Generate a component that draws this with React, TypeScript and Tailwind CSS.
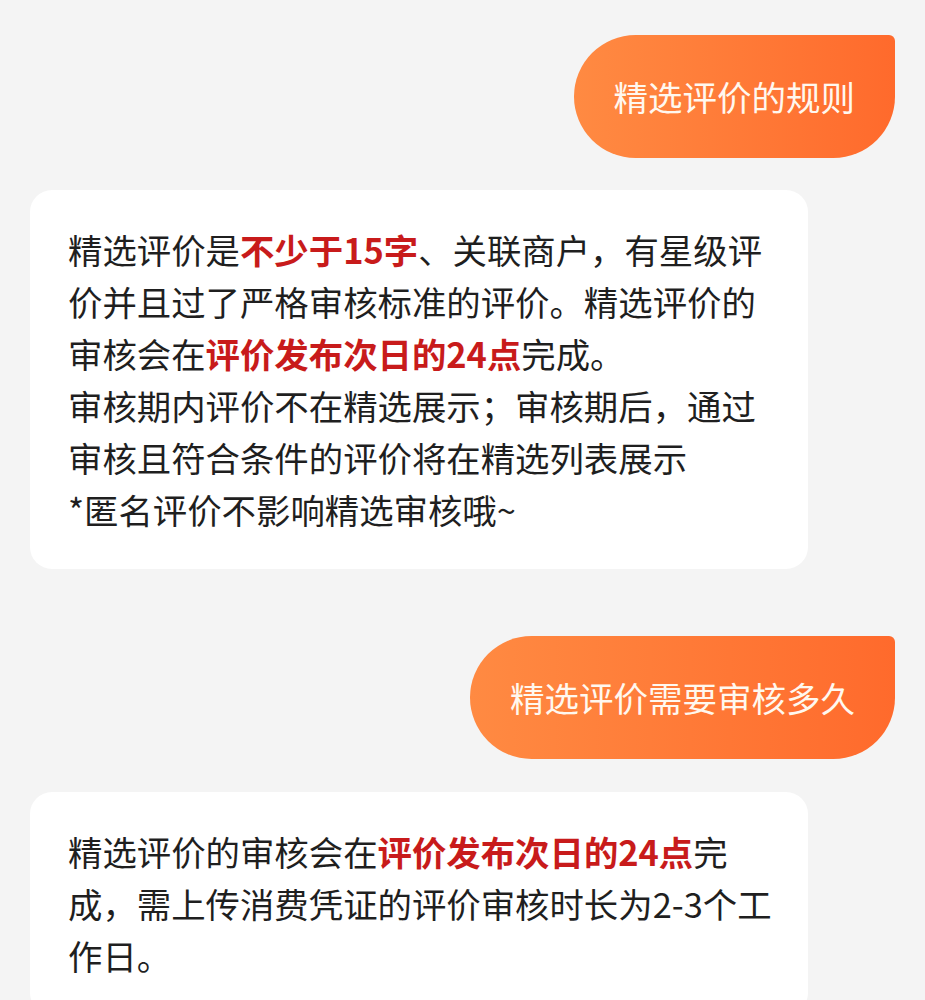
import React from "react";

const font = {
  fontFamily: '"Noto Sans CJK SC", "Noto Sans", sans-serif',
} as React.CSSProperties;

function Question({ children }: { children: React.ReactNode }) {
  return (
    <div className="flex justify-end">
      <div className="flex h-[123px] items-center whitespace-nowrap rounded-[62px] rounded-tr-[6px] bg-gradient-to-r from-[#ff8a42] to-[#ff6a2c] px-[40px] text-[34.5px] text-[#fff8ef]">
        {children}
      </div>
    </div>
  );
}

function Hl({ children }: { children: React.ReactNode }) {
  return <span className="font-bold text-[#c81b1b]">{children}</span>;
}

function Answer({ children }: { children: React.ReactNode }) {
  return (
    <div className="w-[778px] rounded-[22px] bg-white px-[38px] pb-[34px] pt-[33px] text-[34.4px] leading-[52px] text-[#1f1f1f]">
      {children}
    </div>
  );
}

export default function App() {
  return (
    <div
      className="min-h-screen overflow-hidden bg-[#f4f4f4] px-[30px] pt-[35px]"
      style={font}
    >
      <Question>精选评价的规则</Question>

      <div className="mt-[32px]">
        <Answer>
          <div className="whitespace-nowrap">
            精选评价是<Hl>不少于15字</Hl>、关联商户，有星级评
          </div>
          <div className="whitespace-nowrap">
            价并且过了严格审核标准的评价。精选评价的
          </div>
          <div className="whitespace-nowrap">
            审核会在<Hl>评价发布次日的24点</Hl>完成。
          </div>
          <div className="whitespace-nowrap">
            审核期内评价不在精选展示；审核期后，通过
          </div>
          <div className="whitespace-nowrap">
            审核且符合条件的评价将在精选列表展示
          </div>
          <div className="whitespace-nowrap">*匿名评价不影响精选审核哦~</div>
        </Answer>
      </div>

      <div className="mt-[67px]">
        <Question>精选评价需要审核多久</Question>
      </div>

      <div className="mt-[33px]">
        <Answer>
          <div className="whitespace-nowrap">
            精选评价的审核会在<Hl>评价发布次日的24点</Hl>完
          </div>
          <div className="whitespace-nowrap">
            成，需上传消费凭证的评价审核时长为2-3个工
          </div>
          <div className="whitespace-nowrap">作日。</div>
        </Answer>
      </div>
    </div>
  );
}
